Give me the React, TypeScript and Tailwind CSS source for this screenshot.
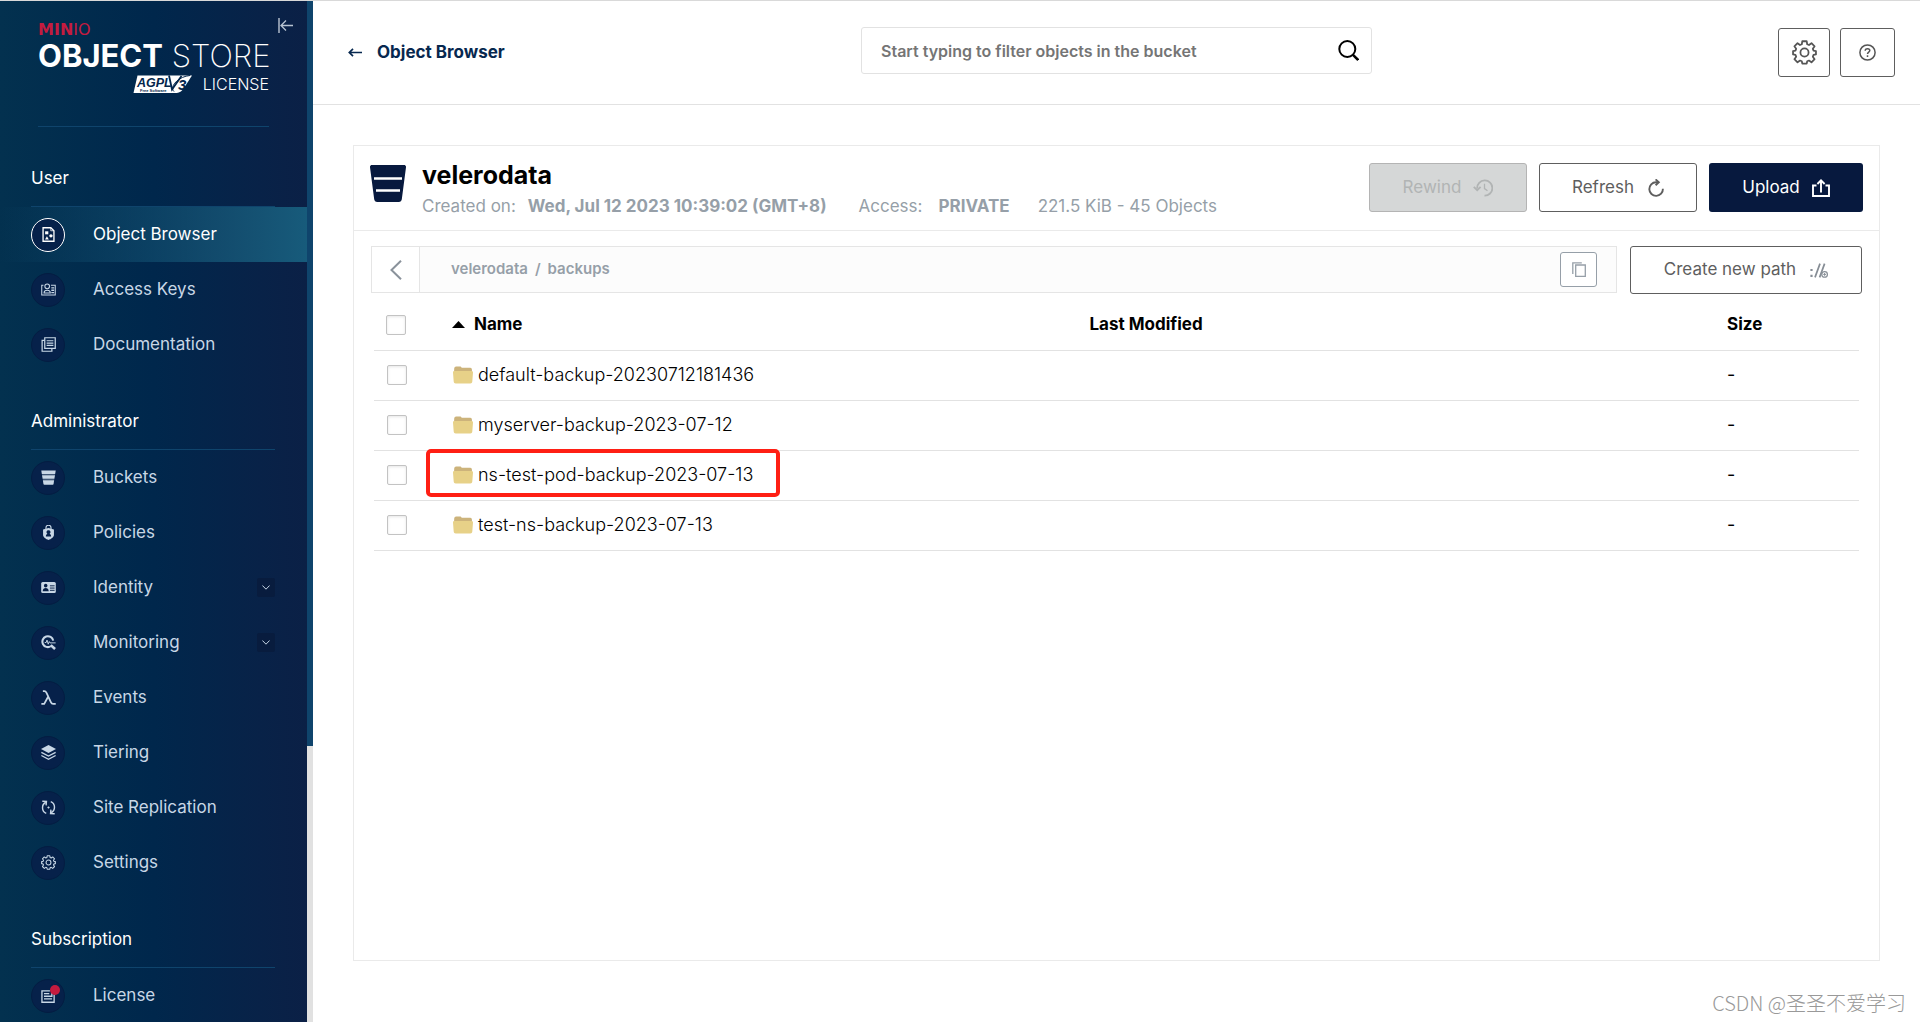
import type { ReactNode } from "react";

const icon = "w-[15px] h-[15px]";

const ObjectBrowserIcon = () => (
  <svg className={icon} viewBox="0 0 16 16" fill="none">
    <path d="M2.2.8h8.3l3.3 3.2v11.2H2.2z" stroke="currentColor" strokeWidth="1.4" />
    <path d="M10.4.8v3.2h3.4" stroke="currentColor" strokeWidth=".8" />
    <path d="M4.4 4.6h3.4v3.2H4.4z" fill="currentColor" />
    <circle cx="10.6" cy="9.4" r="1.8" fill="currentColor" />
    <path d="M6.3 9.8l2 3.4h-4z" fill="currentColor" />
  </svg>
);

const AccessKeysIcon = () => (
  <svg className={icon} viewBox="0 0 16 16" fill="none" stroke="currentColor" strokeWidth="1.1">
    <path d="M2.6 3.5H.8v10.3h14.4V3.5h-4.6" />
    <circle cx="6.6" cy="4.6" r="2.5" />
    <path d="M3.2 11.8c.2-4 6.6-4 6.8 0z" />
    <path d="M11 6.3h3M11 8.8h3M11 11.3h3" strokeWidth="1.4" />
  </svg>
);

const DocumentationIcon = () => (
  <svg className={icon} viewBox="0 0 16 16" fill="none" stroke="currentColor" strokeWidth="1.3">
    <path d="M4 .8h11.2v11.4H4z" />
    <path d="M4 3.6H1.2v11.6h10.4v-3" />
    <path d="M6 4h7.2M6 6.5h7.2M6 9h7.2" />
  </svg>
);

const BucketsIcon = () => (
  <svg className={icon} viewBox="0 0 16 16" fill="currentColor">
    <path d="M.3.4h15.4l-.6 3.8H.9z" />
    <path d="M1.1 5.6h13.8l-.6 3.8H1.7z" />
    <path d="M2 10.8h12l-.6 4.2c-.1.5-.4.8-.9.8h-9c-.5 0-.8-.3-.9-.8z" />
    <path d="M1.1 4.2h13.8v1.4H1.1zM1.9 9.4h12.2v1.4H1.9z" opacity=".3" />
  </svg>
);

const PoliciesIcon = () => (
  <svg className={icon} viewBox="0 0 16 16" fill="none">
    <path d="M5.3 4.6V3a2.7 2.7 0 015.4 0v1.6" stroke="currentColor" strokeWidth="1.2" />
    <path
      fillRule="evenodd"
      d="M2.2 4.8L8 3.2l5.8 1.6v5.6c0 2.8-3 4.6-5.8 5.6-2.8-1-5.8-2.8-5.8-5.6zM8 5.6a2 2 0 00-1.2 3.7c-1 .5-1.6 1.5-1.6 2.9h5.6c0-1.4-.6-2.4-1.6-2.9A2 2 0 008 5.6z"
      fill="currentColor"
    />
  </svg>
);

const IdentityIcon = () => (
  <svg className={icon} viewBox="0 0 16 16">
    <rect x=".2" y="2.2" width="15.6" height="11.6" rx="1.6" fill="currentColor" />
    <circle cx="5" cy="6" r="1.9" fill="#061e46" />
    <path d="M1.8 12c0-4.6 6.4-4.6 6.4 0z" fill="#061e46" />
    <path d="M9.5 6.2h5M9.5 8.6h5M9.5 11h5" stroke="#061e46" strokeWidth="1" />
  </svg>
);

const MonitoringIcon = () => (
  <svg className={icon} viewBox="0 0 16 16" fill="none" stroke="currentColor">
    <path d="M13 6a5.8 5.8 0 10-2.6 6" strokeWidth="2.2" />
    <path d="M10.4 10.8l4.6 4.2" strokeWidth="2.8" />
    <path d="M4 8h1.5l.9-2.6 1.3 4.4L8.8 7l.9 1.4h5.9" strokeWidth="1" />
  </svg>
);

const EventsIcon = () => (
  <svg className={icon} viewBox="0 0 16 16" fill="none" stroke="currentColor" strokeWidth="1.9">
    <path d="M2 1.2h1.6c1.3 0 1.7.6 2.3 1.8l4.6 9.9c.6 1.3 1.2 1.9 2.4 1.9h2.8" />
    <path d="M7.6 7.2L3.4 14.8H.4" />
  </svg>
);

const TieringIcon = () => (
  <svg className={icon} viewBox="0 0 16 16" fill="none">
    <path d="M8 0l8 4.2-8 4.2-8-4.2z" fill="currentColor" />
    <path d="M.4 7.8L8 11.8l7.6-4M.4 11.2L8 15.2l7.6-4" stroke="currentColor" strokeWidth="1.4" />
  </svg>
);

const ReplicationIcon = () => (
  <svg className={icon} viewBox="0 0 16 16" fill="none" stroke="currentColor" strokeWidth="1.5">
    <path d="M5.6 14.2A6.5 6.5 0 015.2 2.4" />
    <path d="M1.4 1.4l4.4.2-.4 4.2" />
    <path d="M10.4 1.8a6.5 6.5 0 01.4 11.8" />
    <path d="M14.6 14.6l-4.4-.2.4-4.2" />
    <path d="M8 6.6L9.4 8 8 9.4 6.6 8z" fill="currentColor" stroke="none" />
  </svg>
);

const GearIcon = ({ className }: { className: string }) => (
  <svg className={className} viewBox="0 0 24 24" fill="none" stroke="currentColor" strokeWidth="1.7" strokeLinejoin="round">
    <path d="M9.9 1.2h4.2l.5 2.9 1.7.7 2.4-1.7 3 3-1.7 2.4.7 1.7 2.3.4v3.2l-2.3.5-.7 1.7 1.7 2.4-3 3-2.4-1.7-1.7.7-.5 2.3H9.9l-.5-2.3-1.7-.7-2.4 1.7-3-3L4 16l-.7-1.7-2.3-.5v-3.2l2.3-.4L4 8.5 2.3 6.1l3-3 2.4 1.7 1.7-.7z" />
    <circle cx="12" cy="12" r="3.9" />
  </svg>
);

const SettingsIcon = () => <GearIcon className={icon} />;

const LicenseIcon = () => (
  <svg className={icon} viewBox="0 0 16 16" fill="none" stroke="currentColor" strokeWidth="1.4">
    <path d="M9.5 3H1v12.2h13V7" />
    <path d="M3.2 6h5.6M3.2 8.8h8.6M3.2 11.6h8.6" />
    <path d="M11.6 9.5V5" />
  </svg>
);

const BucketIcon = () => (
  <svg className="w-9 h-[37px] shrink-0" viewBox="0 0 36 37">
    <path d="M2 0h32c1.3 0 2.2 1 2 2.3l-4.2 32c-.2 1.6-1.3 2.7-3 2.7H7.2c-1.7 0-2.8-1.1-3-2.7L0 2.3C-.2 1 .7 0 2 0z" fill="#07193e" />
    <path d="M4 13.5h28M6 25.5h24" stroke="#fff" strokeWidth="2.6" />
  </svg>
);

const FolderIcon = () => (
  <svg className="w-5 h-[18px] shrink-0" viewBox="0 0 20 18">
    <path d="M1.2 2.5C1.4 1.2 2 .5 3.2.5h3.6c1 0 1.5.5 1.9 1.3h8.6c1 0 1.5.7 1.6 1.7L19 8H1z" fill="#ccb37b" />
    <path d="M0 6.5C0 5.4.6 5 1.5 5h17c1 0 1.5.6 1.5 1.5l-.7 9c-.1 1.3-.8 2-2 2H2.7c-1.2 0-1.9-.7-2-2z" fill="#e7d188" />
  </svg>
);

const RewindIcon = () => (
  <svg className="w-5 h-[18px]" viewBox="0 0 20 18" fill="none" stroke="currentColor" strokeWidth="1.8">
    <path d="M4.2 9.5a7.6 7.6 0 117.3 7.1" />
    <path d="M.8 7.8l3.4 3.4 3.4-3.4" />
    <path d="M11.5 4.8v4.8l3 2.2" strokeWidth="1.3" />
  </svg>
);

const RefreshIcon = () => (
  <svg className="w-4 h-[18px]" viewBox="0 0 16 18" fill="none" stroke="currentColor" strokeWidth="1.9">
    <path d="M10 3.3H8a6.8 6.8 0 106.9 6.5" />
    <path d="M7.6.4l3.2 2.9-3.2 3" />
  </svg>
);

const UploadIcon = () => (
  <svg className="w-[18px] h-[18px]" viewBox="0 0 18 18" fill="none" stroke="currentColor" strokeWidth="1.9">
    <path d="M4.5 6.5H1V17h16V6.5h-3.5" />
    <path d="M9 13.5V1.8M5.4 5L9 1.4 12.6 5" />
  </svg>
);

const NewPathIcon = () => (
  <svg className="w-[18px] h-[15px] text-[#868d95]" viewBox="0 0 18 15" fill="none" stroke="currentColor" strokeWidth="1.7">
    <path d="M.4 7h2.2M.4 12.8h2.2" strokeWidth="2.2" />
    <path d="M5 14.4L10 .6M9.6 14.4l5-13.8" />
    <circle cx="14.6" cy="11.4" r="2.8" strokeWidth="1.2" />
    <path d="M14.6 10v2.8M13.2 11.4H16" strokeWidth="1" />
  </svg>
);

const Logo = () => (
  <div className="px-[38px]">
    <p className="text-base leading-[14px] text-[#c51b3f] font-['DejaVu_Sans',sans-serif]">
      <span className="font-bold">MIN</span>
      <span>IO</span>
    </p>
    <p className="mt-0.5 text-[31px] leading-[34px] whitespace-nowrap">
      <span className="font-bold">OBJECT</span> <span className="font-extralight">STORE</span>
    </p>
    <div className="flex items-center justify-end gap-2.5 mt-px">
      <svg className="w-[60px] h-5" viewBox="0 0 60 20">
        <path d="M4.5 1.5H59L51 14c-2 3-4.5 5-9 5H.5z" fill="#fff" />
        <text x="4" y="13" fontSize="12.5" fontWeight="700" fontStyle="italic" fill="#04264c" fontFamily="Liberation Sans">AGPL</text>
        <text x="7" y="17.8" fontSize="4" fontWeight="700" fill="#04264c" fontFamily="Liberation Sans">Free Software</text>
        <path d="M36 1.5l3 14L48.5 2" fill="none" stroke="#04264c" strokeWidth="1.8" />
        <text x="45" y="15.5" fontSize="15" fontWeight="700" fontStyle="italic" fill="#04264c" fontFamily="Liberation Sans">3</text>
        <path d="M41 17.5C36 13 45 2.5 57 1.5" fill="none" stroke="#04264c" />
      </svg>
      <span className="text-base leading-5 font-light">LICENSE</span>
    </div>
  </div>
);

type Item = { label: string; icon: () => ReactNode; active?: boolean; expandable?: boolean; badge?: boolean };

const sections: { title: string; items: Item[] }[] = [
  {
    title: "User",
    items: [
      { label: "Object Browser", icon: ObjectBrowserIcon, active: true },
      { label: "Access Keys", icon: AccessKeysIcon },
      { label: "Documentation", icon: DocumentationIcon },
    ],
  },
  {
    title: "Administrator",
    items: [
      { label: "Buckets", icon: BucketsIcon },
      { label: "Policies", icon: PoliciesIcon },
      { label: "Identity", icon: IdentityIcon, expandable: true },
      { label: "Monitoring", icon: MonitoringIcon, expandable: true },
      { label: "Events", icon: EventsIcon },
      { label: "Tiering", icon: TieringIcon },
      { label: "Site Replication", icon: ReplicationIcon },
      { label: "Settings", icon: SettingsIcon },
    ],
  },
  {
    title: "Subscription",
    items: [{ label: "License", icon: LicenseIcon, badge: true }],
  },
];

const folders = [
  { name: "default-backup-20230712181436" },
  { name: "myserver-backup-2023-07-12" },
  { name: "ns-test-pod-backup-2023-07-13", marked: true },
  { name: "test-ns-backup-2023-07-13" },
];

function NavItem({ item }: { item: Item }) {
  const Icon = item.icon;
  return (
    <a
      href="#"
      className={`flex items-center h-[55px] pl-[31px] pr-8 ${
        item.active ? "text-white bg-linear-to-r from-transparent to-[#175b7b]" : "text-[#c8d7e6]"
      }`}
    >
      <span
        className={`relative w-[34px] h-[34px] rounded-full border flex items-center justify-center bg-[#06214a] ${
          item.active ? "border-white" : "border-[#041d42]"
        }`}
      >
        <Icon />
        {item.badge && <span className="absolute top-[5px] right-1 w-2.5 h-2.5 rounded-full bg-[#c51b3f]" />}
      </span>
      <span className="ml-7 grow">{item.label}</span>
      {item.expandable && (
        <span className="w-[18px] h-[19px] rounded-xs bg-[#081c3e] flex items-center justify-center">
          <svg className="w-2 h-[5px]" viewBox="0 0 8 5" fill="none" stroke="currentColor">
            <path d="M.4.5L4 4.2 7.6.5" />
          </svg>
        </span>
      )}
    </a>
  );
}

function Sidebar() {
  return (
    <aside className="flex w-[313px] shrink-0 h-full overflow-hidden">
      <div className="grow min-w-0 text-white text-[17px] bg-linear-to-r from-[#03314f] via-[#00274c] to-[#0b2046]">
        <div className="flex justify-end pt-[17px] pr-3.5">
          <button aria-label="Collapse menu">
            <svg className="w-[15px] h-[15px]" viewBox="0 0 15 15" fill="none" stroke="#b8c4d2" strokeWidth="1.3">
              <path d="M1 0v15" stroke="#8593a8" strokeWidth="2" />
              <path d="M15 7.5H3.5M8 2.5l-5 5 5 5" />
            </svg>
          </button>
        </div>
        <div className="-mt-2.5">
          <Logo />
        </div>
        <hr className="mx-[38px] mt-8 mb-0.5 border-[#0f446c]" />
        {sections.map((s) => (
          <nav key={s.title} aria-label={s.title}>
            <h2 className="mx-[31px] leading-[26px] pt-9 pb-[15px]">{s.title}</h2>
            <hr className="ml-[31px] mr-8 border-[#0f446c]" />
            {s.items.map((item) => (
              <NavItem key={item.label} item={item} />
            ))}
          </nav>
        ))}
      </div>
      <div className="w-1.5 shrink-0 bg-[#e1e1e1]">
        <div className="h-[73%] bg-[#0f446c]" />
      </div>
    </aside>
  );
}

function Header() {
  return (
    <header className="flex items-center h-[104px] shrink-0 border-b border-[#e2e2e2] px-[25px]">
      <div className="flex-1">
        <a href="#" className="inline-flex items-center gap-[15px] ml-2.5 font-bold text-[17px] text-[#07284f]">
          <svg className="w-3.5 h-[9px]" viewBox="0 0 14 9" fill="none" stroke="currentColor" strokeWidth="1.7">
            <path d="M14 4.5H1.5M5 .8L1.3 4.5 5 8.2" />
          </svg>
          Object Browser
        </a>
      </div>
      <label className="flex items-center w-[511px] h-[47px] mb-1 border border-[#e2e2e2] rounded-[3px] pl-[19px] pr-3">
        <input
          type="text"
          placeholder="Start typing to filter objects in the bucket"
          aria-label="Filter objects"
          className="grow text-base font-semibold outline-none placeholder:text-[#757575]"
        />
        <svg className="w-[21px] h-[21px]" viewBox="0 0 21 21" fill="none" stroke="#000" strokeWidth="2">
          <circle cx="9.3" cy="9" r="8" />
          <path d="M15 14.8l5.2 5.2" strokeWidth="2.5" />
        </svg>
      </label>
      <div className="flex flex-1 justify-end gap-2.5 text-[#555]">
        <button aria-label="Settings" className="flex items-center justify-center w-[52px] h-[49px] border border-[#5e5e5e] rounded-[3px]">
          <GearIcon className="w-[25px] h-[25px]" />
        </button>
        <button aria-label="Help" className="flex items-center justify-center w-[55px] h-[49px] border border-[#5e5e5e] rounded-[3px]">
          <svg className="w-[17px] h-[17px]" viewBox="0 0 17 17" fill="none" stroke="currentColor" strokeWidth="1.5">
            <circle cx="8.5" cy="8.5" r="7.6" />
            <path d="M6.2 6.8c0-3 4.6-2.7 4.6-.2 0 1.6-2.3 1.5-2.3 3.4M8.5 11.3v1.8" />
          </svg>
        </button>
      </div>
    </header>
  );
}

function BucketHeader() {
  return (
    <div className="flex items-start h-[85px] px-4 border-b border-[#eaeaea]">
      <div className="pt-[19px]">
        <BucketIcon />
      </div>
      <div className="pl-4 pt-3.5 grow">
        <h1 className="text-[25px] leading-[30px] font-bold text-black">velerodata</h1>
        <p className="flex text-[17px] leading-8 text-[#969fa8]">
          <span>Created on:</span>
          <b className="ml-3 font-bold">Wed, Jul 12 2023 10:39:02 (GMT+8)</b>
          <span className="ml-8">Access:</span>
          <b className="ml-4 font-bold">PRIVATE</b>
          <span className="ml-7">221.5 KiB - 45 Objects</span>
        </p>
      </div>
      <div className="flex gap-3 pt-[17px] text-[17px]">
        <button disabled className="flex items-center justify-center gap-3 w-[158px] h-[49px] rounded-[3px] border border-[#b4b4b4] bg-[#d5d7d7] text-[#b1b4b4]">
          Rewind <RewindIcon />
        </button>
        <button className="flex items-center justify-center gap-3.5 w-[158px] h-[49px] rounded-[3px] border border-[#5e5e5e] text-[#5e5e5e]">
          Refresh <RefreshIcon />
        </button>
        <button className="flex items-center justify-center gap-3 w-[154px] h-[49px] rounded-[3px] bg-[#07193e] text-white">
          Upload <UploadIcon />
        </button>
      </div>
    </div>
  );
}

function PathBar() {
  return (
    <div className="flex items-start gap-[13px] px-[17px] pt-[15px]">
      <div className="flex grow h-[47px] border border-[#e5e5e5] bg-[#fcfcfc]">
        <button aria-label="Up one level" className="flex items-center justify-center w-12 border-r border-[#e5e5e5] bg-white">
          <svg className="w-3 h-5" viewBox="0 0 12 20" fill="none" stroke="#8a929b" strokeWidth="2">
            <path d="M11 .8L1.5 10l9.5 9.2" />
          </svg>
        </button>
        <div className="flex grow items-center gap-[7px] pl-[31px] pr-[19px] text-[15px] font-semibold text-[#969fa8]">
          <a href="#">velerodata</a>
          <span>/</span>
          <a href="#">backups</a>
          <button aria-label="Copy path" className="ml-auto flex items-center justify-center w-[37px] h-[35px] rounded-[3px] border border-[#969fa8] bg-white">
            <svg className="w-3.5 h-[15px]" viewBox="0 0 14 15" fill="none" stroke="#969fa8" strokeWidth="1.3">
              <path d="M3.7 3h9.6v11.3H3.7z" />
              <path d="M.8 12V.8h9" />
            </svg>
          </button>
        </div>
      </div>
      <button className="flex items-center justify-center gap-3.5 w-[232px] h-12 shrink-0 rounded-[3px] border border-[#5e5e5e] text-[17px] text-[#5e5e5e]">
        Create new path <NewPathIcon />
      </button>
    </div>
  );
}

const checkbox =
  "block w-5 h-5 appearance-none rounded-xs border border-[#c3c3c3] bg-white shadow-[inset_0_1px_3px_rgba(0,0,0,0.1)] checked:bg-[#07193e]";

function ObjectTable() {
  return (
    <div className="px-5">
      <table className="w-full table-fixed text-left text-black">
        <colgroup>
          <col className="w-[78px]" />
          <col />
          <col />
          <col className="w-[132px]" />
        </colgroup>
        <thead className="text-[17px]">
          <tr className="h-14 border-b border-[#e2e2e2]">
            <th className="pl-3 pt-1.5">
              <input type="checkbox" aria-label="Select all" className={checkbox} />
            </th>
            <th className="pt-1.5 font-bold">
              <span className="flex items-center gap-[9px]">
                <svg className="w-[13px] h-[7px]" viewBox="0 0 13 7">
                  <path d="M6.5 0L13 7H0z" />
                </svg>
                Name
              </span>
            </th>
            <th className="pt-1.5 font-bold">Last Modified</th>
            <th className="pt-1.5 font-bold">Size</th>
          </tr>
        </thead>
        <tbody className="text-lg">
          {folders.map((f) => (
            <tr key={f.name} className="h-[50px] border-b border-[#e2e2e2]">
              <td className="pl-[13px]">
                <input type="checkbox" aria-label={f.name} className={checkbox} />
              </td>
              <td>
                <div className="relative flex items-center gap-[5px] pl-px font-light">
                  <FolderIcon />
                  {f.name}
                  {f.marked && (
                    <span className="absolute -left-[26px] -top-3 w-[354px] h-12 rounded-[5px] border-4 border-[#ff1f14]" />
                  )}
                </div>
              </td>
              <td />
              <td>-</td>
            </tr>
          ))}
        </tbody>
      </table>
    </div>
  );
}

export default function App() {
  return (
    <div className="relative flex h-screen bg-white border-t border-[#d9d9d9] font-[Inter,'Noto_Sans_CJK_SC',sans-serif] overflow-hidden">
      <Sidebar />
      <div className="flex flex-col grow min-w-0">
        <Header />
        <main className="flex grow px-10 pt-10 pb-[61px]">
          <section className="grow min-w-0 border border-[#eaeaea]">
            <BucketHeader />
            <PathBar />
            <ObjectTable />
          </section>
        </main>
      </div>
      <p className="absolute right-3.5 bottom-1 text-xl leading-[30px] text-[#999] font-['Noto_Sans_CJK_SC',sans-serif] font-light">
        CSDN @圣圣不爱学习
      </p>
    </div>
  );
}
